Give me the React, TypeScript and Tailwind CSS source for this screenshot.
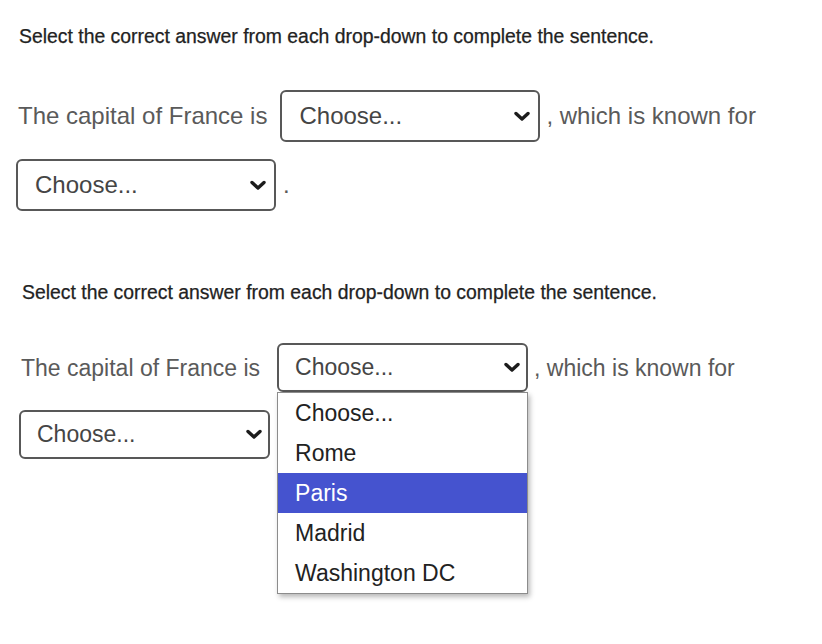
import { useState } from "react";

type Size = "lg" | "md";

const cities = ["Choose...", "Rome", "Paris", "Madrid", "Washington DC"];

function Chevron() {
  return (
    <svg width="16" height="11" viewBox="0 0 16 11" className="shrink-0">
      <polyline
        points="2,2.5 8,8 14,2.5"
        fill="none"
        stroke="#1c1c1c"
        strokeWidth="3.4"
        strokeLinecap="round"
        strokeLinejoin="round"
      />
    </svg>
  );
}

function FakeSelect({ size, open, className }: { size: Size; open?: boolean; className?: string }) {
  const box =
    size === "lg"
      ? "w-[260px] h-[52px] pl-[17px] pr-[8px] text-[24px]"
      : "w-[251px] h-[49px] pl-[16px] pr-[6px] text-[23px]";

  return (
    <div className={`relative shrink-0 ${className ?? ""}`}>
      <div
        className={`${box} flex items-center justify-between border-2 border-[#585858] rounded-[6px] bg-white text-[#454545] leading-none`}
      >
        <span>Choose...</span>
        <Chevron />
      </div>
      {open && (
        <ul className="absolute left-0 top-full w-full border border-[#8c8c8c] bg-white shadow-[2px_3px_5px_rgba(0,0,0,0.28)] z-10">
          {cities.map((c) => (
            <li
              key={c}
              className={
                c === "Paris"
                  ? "h-[40px] flex items-center pl-[17px] text-[23px] bg-[#4553cf] text-white"
                  : "h-[40px] flex items-center pl-[17px] text-[23px] text-[#222]"
              }
            >
              {c}
            </li>
          ))}
        </ul>
      )}
    </div>
  );
}

function Question({ size, open }: { size: Size; open?: boolean }) {
  const lg = size === "lg";
  return (
    <section className={lg ? "pl-[16px] pt-[24px]" : "pl-[19px] pt-[69px]"}>
      <p className="text-[19.4px] leading-[24px] text-[#222] pl-[3px] [-webkit-text-stroke:0.25px_#222]">
        Select the correct answer from each drop-down to complete the sentence.
      </p>
      <div
        className={
          lg
            ? "mt-[42px] flex flex-wrap items-center gap-y-[17px] w-[790px] text-[24px] leading-[24px] text-[#5a5a5a]"
            : "mt-[39px] flex flex-wrap items-center gap-y-[18px] w-[790px] text-[23px] leading-[24px] text-[#5a5a5a]"
        }
      >
        <span className="pl-[2px]">The capital of France is</span>
        <FakeSelect size={size} open={open} className={lg ? "ml-[13px]" : "ml-[17px]"} />
        <span className="ml-[6px]">, which is known for</span>
        <FakeSelect size={size} />
        <span className="ml-[7px]">.</span>
      </div>
    </section>
  );
}

export default function App() {
  const [open] = useState(true);
  return (
    <div className="w-[822px] h-[644px] overflow-hidden bg-white font-['Liberation_Sans',Arial,sans-serif]">
      <Question size="lg" />
      <Question size="md" open={open} />
    </div>
  );
}
